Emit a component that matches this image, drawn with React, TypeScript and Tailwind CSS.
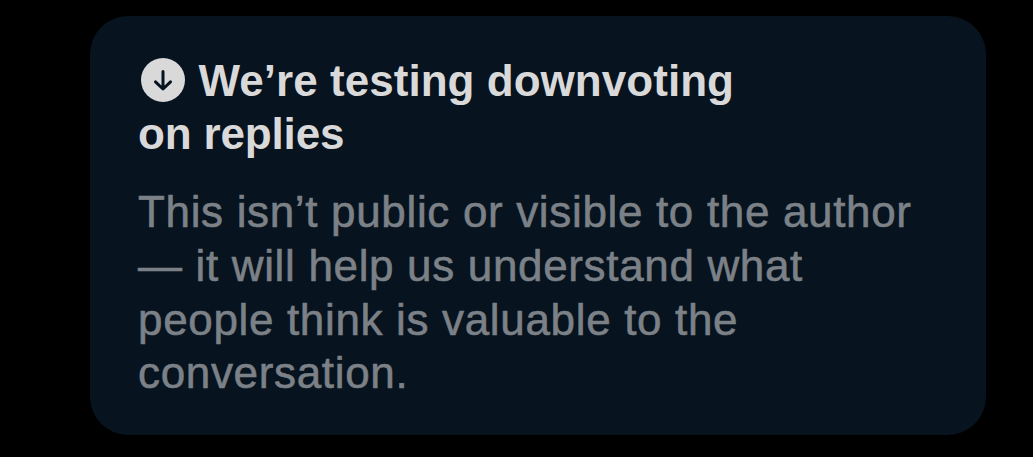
const bodyLines = [
  "This isn’t public or visible to the author",
  "— it will help us understand what",
  "people think is valuable to the",
  "conversation.",
];

function DownvoteIcon() {
  return (
    <svg width="44" height="44" viewBox="0 0 44 44" className="mb-0.5 shrink-0" aria-hidden="true">
      <circle cx="22" cy="22" r="22" fill="#d9d9d9" />
      <path
        d="M22 13.5v17M14.5 23.8l7.5 7.2 7.5-7.2"
        fill="none"
        stroke="#07131e"
        strokeWidth="3"
        strokeLinecap="round"
        strokeLinejoin="round"
      />
    </svg>
  );
}

export default function App() {
  return (
    <main className="h-[457px] w-[1033px] overflow-hidden bg-black pt-4 pl-[90px]">
      <section className="h-[419px] w-[896px] rounded-[38px] bg-[#07131e] pt-[38px] pl-12">
        <h1 className="font-['Liberation_Sans',sans-serif] text-[44px] leading-[53px] font-bold text-[#d9d9d9]">
          <span className="flex items-center gap-3.5 pl-[2.5px] whitespace-nowrap">
            <DownvoteIcon />
            <span className="tracking-[0.04px]">We’re testing downvoting</span>
          </span>
          <span className="block tracking-[-0.15px]">on replies</span>
        </h1>
        <p className="mt-[25px] font-['Liberation_Sans',sans-serif] text-[44px] leading-[53.8px] tracking-[0.66px] text-[#7b8187] [-webkit-text-stroke:0.6px_#7b8187]">
          {bodyLines.map((line) => (
            <span key={line} className="block whitespace-nowrap">
              {line}
            </span>
          ))}
        </p>
      </section>
    </main>
  );
}
